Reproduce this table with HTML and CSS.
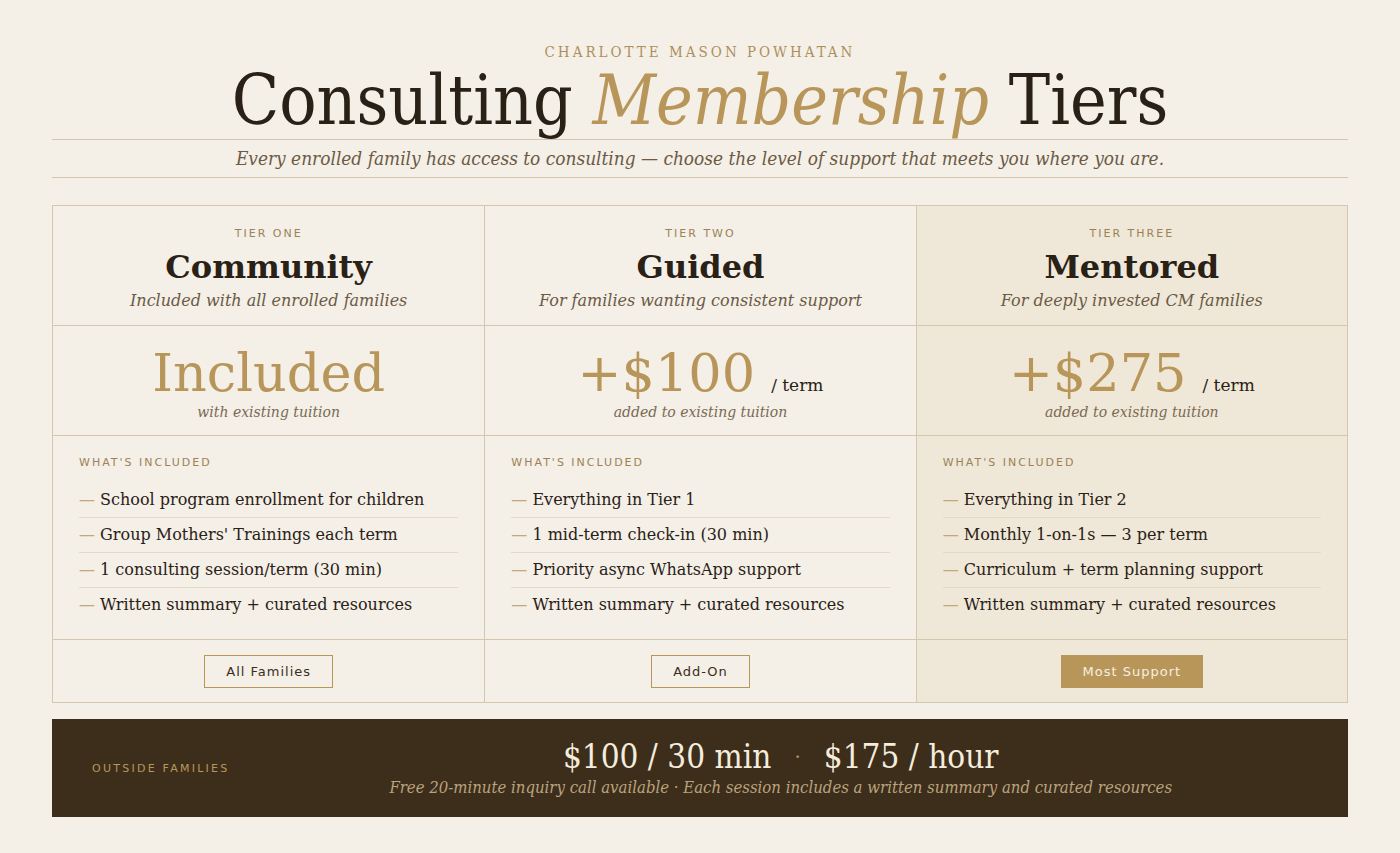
FILE: index.html
```html
<!DOCTYPE html>
<html lang="en">
<head>
<meta charset="utf-8">
<title>Consulting Membership Tiers</title>
<link rel="stylesheet" href="styles.css">
</head>
<body>
<main class="page">
  <header class="hero">
    <p class="eyebrow">Charlotte Mason Powhatan</p>
    <h1 class="title">Consulting <em>Membership</em> Tiers</h1>
    <p class="lede">Every enrolled family has access to consulting — choose the level of support that meets you where you are.</p>
  </header>

  <section class="tiers">
    <article class="tier">
      <div class="tier-head">
        <p class="tier-num">Tier One</p>
        <h2 class="tier-name">Community</h2>
        <p class="tier-sub">Included with all enrolled families</p>
      </div>
      <div class="tier-price">
        <div class="price-line"><span class="price">Included</span></div>
        <p class="price-note">with existing tuition</p>
      </div>
      <div class="tier-body">
        <p class="label">What's Included</p>
        <ul class="features">
          <li><span class="dash">—</span> School program enrollment for children</li>
          <li><span class="dash">—</span> Group Mothers' Trainings each term</li>
          <li><span class="dash">—</span> 1 consulting session/term (30 min)</li>
          <li><span class="dash">—</span> Written summary + curated resources</li>
        </ul>
      </div>
      <div class="tier-foot"><span class="badge">All Families</span></div>
    </article>

    <article class="tier">
      <div class="tier-head">
        <p class="tier-num">Tier Two</p>
        <h2 class="tier-name">Guided</h2>
        <p class="tier-sub">For families wanting consistent support</p>
      </div>
      <div class="tier-price">
        <div class="price-line"><span class="price">+$100</span><span class="per">/ term</span></div>
        <p class="price-note">added to existing tuition</p>
      </div>
      <div class="tier-body">
        <p class="label">What's Included</p>
        <ul class="features">
          <li><span class="dash">—</span> Everything in Tier 1</li>
          <li><span class="dash">—</span> 1 mid-term check-in (30 min)</li>
          <li><span class="dash">—</span> Priority async WhatsApp support</li>
          <li><span class="dash">—</span> Written summary + curated resources</li>
        </ul>
      </div>
      <div class="tier-foot"><span class="badge">Add-On</span></div>
    </article>

    <article class="tier tier-featured">
      <div class="tier-head">
        <p class="tier-num">Tier Three</p>
        <h2 class="tier-name">Mentored</h2>
        <p class="tier-sub">For deeply invested CM families</p>
      </div>
      <div class="tier-price">
        <div class="price-line"><span class="price">+$275</span><span class="per">/ term</span></div>
        <p class="price-note">added to existing tuition</p>
      </div>
      <div class="tier-body">
        <p class="label">What's Included</p>
        <ul class="features">
          <li><span class="dash">—</span> Everything in Tier 2</li>
          <li><span class="dash">—</span> Monthly 1-on-1s — 3 per term</li>
          <li><span class="dash">—</span> Curriculum + term planning support</li>
          <li><span class="dash">—</span> Written summary + curated resources</li>
        </ul>
      </div>
      <div class="tier-foot"><span class="badge badge-solid">Most Support</span></div>
    </article>
  </section>

  <section class="outside">
    <p class="outside-label">Outside Families</p>
    <div class="outside-main">
      <p class="outside-rates">$100 / 30 min <span class="dot">·</span> $175 / hour</p>
      <p class="outside-note">Free 20-minute inquiry call available · Each session includes a written summary and curated resources</p>
    </div>
  </section>
</main>
</body>
</html>
```

FILE: styles.css
```css
* { box-sizing: border-box; }

html, body {
  margin: 0;
  padding: 0;
  background: #f4efe7;
}

body {
  font-family: "DejaVu Serif", serif;
  color: #2a2116;
}

p, h1, h2, ul { margin: 0; padding: 0; }

.page {
  padding: 42px 52px 36px;
}

.hero {
  text-align: center;
}

.eyebrow {
  font-family: "DejaVu Serif Condensed", "DejaVu Serif", serif;
  font-stretch: condensed;
  font-size: 15px;
  letter-spacing: 3px;
  text-transform: uppercase;
  color: #ad8f5c;
  line-height: 20px;
}

.title {
  font-family: "DejaVu Serif Condensed", "DejaVu Serif", serif;
  font-stretch: condensed;
  font-weight: normal;
  font-size: 69px;
  line-height: 76px;
  color: #2a2116;
  padding-bottom: 1px;
}

.title em {
  color: #b8965a;
  font-style: italic;
}

.lede {
  font-family: "DejaVu Serif Condensed", "DejaVu Serif", serif;
  font-stretch: condensed;
  font-style: italic;
  font-size: 18.9px;
  line-height: 37px;
  color: #6b5a44;
  border-top: 1px solid #d6c6ae;
  border-bottom: 1px solid #d6c6ae;
}

.tiers {
  margin-top: 27px;
  display: grid;
  grid-template-columns: 1fr 1fr 1fr;
  border: 1px solid #d6c6ae;
}

.tier {
  display: flex;
  flex-direction: column;
  border-left: 1px solid #d6c6ae;
}

.tier:first-child { border-left: none; }

.tier-featured {
  background: #efe8d8;
}

.tier-head {
  height: 120px;
  text-align: center;
  padding-top: 21px;
  border-bottom: 1px solid #d6c6ae;
}

.tier-num {
  font-family: "DejaVu Sans", sans-serif;
  font-size: 11px;
  letter-spacing: 2px;
  text-transform: uppercase;
  color: #9c8256;
  line-height: 14px;
}

.tier-name {
  font-size: 32px;
  font-weight: bold;
  line-height: 38px;
  margin-top: 7px;
  color: #2a2116;
}

.tier-sub {
  font-style: italic;
  font-size: 16px;
  line-height: 24px;
  margin-top: 3px;
  color: #6b5a44;
}

.tier-price {
  height: 110px;
  text-align: center;
  padding-top: 19px;
  border-bottom: 1px solid #d6c6ae;
}

.price-line {
  display: flex;
  justify-content: center;
  align-items: baseline;
  gap: 16px;
  height: 56px;
  line-height: 56px;
}

.price {
  font-size: 52.5px;
  color: #b8965a;
}

.per {
  font-size: 17px;
  color: #2a2116;
}

.price-note {
  font-style: italic;
  font-size: 14px;
  line-height: 20px;
  margin-top: 1px;
  color: #7a6a52;
}

.tier-body {
  flex: none;
  height: 204px;
  padding: 20px 26px 0 26px;
  border-bottom: 1px solid #d6c6ae;
}

.label {
  font-family: "DejaVu Sans", sans-serif;
  font-size: 11px;
  letter-spacing: 2px;
  text-transform: uppercase;
  color: #9c8256;
  line-height: 14px;
  margin-bottom: 13px;
}

.features {
  list-style: none;
}

.features li {
  font-size: 16px;
  line-height: 34px;
  border-bottom: 1px solid #e4d9c8;
  color: #2a2116;
}

.features li:last-child { border-bottom: none; }

.dash {
  color: #c4a877;
}

.tier-foot {
  height: 62px;
  display: flex;
  align-items: center;
  justify-content: center;
}

.badge {
  font-family: "DejaVu Sans", sans-serif;
  font-size: 13px;
  letter-spacing: 1px;
  color: #3a2e20;
  border: 1px solid #b8965a;
  padding: 0 21px;
  line-height: 31px;
}

.badge-solid {
  background: #b8965a;
  color: #f6efe0;
}

.outside {
  margin-top: 16px;
  background: #3d2e1b;
  height: 98px;
  display: flex;
  align-items: center;
  gap: 24px;
  padding: 0 40px;
}

.outside-label {
  font-family: "DejaVu Sans", sans-serif;
  font-size: 11px;
  letter-spacing: 2.25px;
  text-transform: uppercase;
  color: #b8965a;
}

.outside-main {
  flex: 1;
  text-align: center;
}

.outside-rates {
  font-family: "DejaVu Serif Condensed", "DejaVu Serif", serif;
  font-stretch: condensed;
  font-size: 33px;
  line-height: 40px;
  color: #f4ecdc;
}

.dot {
  color: #b8965a;
  font-size: 20px;
  margin: 0 14px;
  vertical-align: 4px;
}

.outside-note {
  font-family: "DejaVu Serif Condensed", "DejaVu Serif", serif;
  font-stretch: condensed;
  font-style: italic;
  font-size: 16.6px;
  line-height: 22px;
  color: #b9a37e;
}
```
